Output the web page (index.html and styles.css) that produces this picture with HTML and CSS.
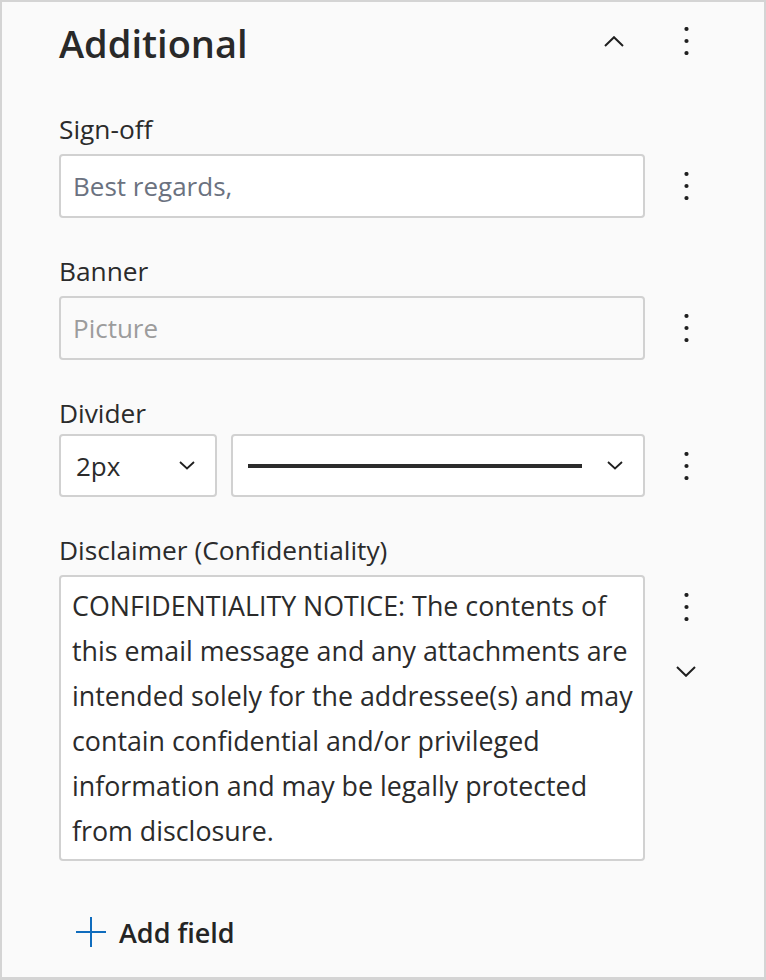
FILE: index.html
```html
<!DOCTYPE html>
<html lang="en">
<head>
    <meta charset="UTF-8">
    <meta name="viewport" content="width=device-width, initial-scale=1">
    <title>Signature - Additional</title>
    <link rel="stylesheet" href="styles.css">
</head>
<body>
    <section class="panel">
        <header class="panel-head">
            <h2 class="panel-title">Additional</h2>
            <button class="icon-btn collapse" aria-label="Collapse section">
                <svg width="20" height="11" viewBox="0 0 20 11"><path d="M1 10 L10 1.2 L19 10" fill="none" stroke="#1f1f1f" stroke-width="2"/></svg>
            </button>
            <div class="actions">
                <button class="icon-btn" aria-label="More options">
                    <svg width="5" height="28" viewBox="0 0 5 28"><circle cx="2.5" cy="2" r="2.1"/><circle cx="2.5" cy="14" r="2.1"/><circle cx="2.5" cy="26" r="2.1"/></svg>
                </button>
            </div>
        </header>

        <div class="field">
            <label class="field-label" for="signoff">Sign-off</label>
            <div class="field-row">
                <input class="text-input" id="signoff" type="text" placeholder="Best regards,">
                <div class="actions">
                    <button class="icon-btn" aria-label="More options">
                        <svg width="5" height="28" viewBox="0 0 5 28"><circle cx="2.5" cy="2" r="2.1"/><circle cx="2.5" cy="14" r="2.1"/><circle cx="2.5" cy="26" r="2.1"/></svg>
                    </button>
                </div>
            </div>
        </div>

        <div class="field">
            <label class="field-label" for="banner">Banner</label>
            <div class="field-row">
                <input class="text-input text-input--muted" id="banner" type="text" placeholder="Picture" disabled>
                <div class="actions">
                    <button class="icon-btn" aria-label="More options">
                        <svg width="5" height="28" viewBox="0 0 5 28"><circle cx="2.5" cy="2" r="2.1"/><circle cx="2.5" cy="14" r="2.1"/><circle cx="2.5" cy="26" r="2.1"/></svg>
                    </button>
                </div>
            </div>
        </div>

        <div class="field">
            <span class="field-label field-label--tight">Divider</span>
            <div class="field-row">
                <div class="select-group">
                    <button class="select select--size">
                        <span>2px</span>
                        <svg width="16" height="9" viewBox="0 0 16 9"><path d="M1 1 L8 7.5 L15 1" fill="none" stroke="#1f1f1f" stroke-width="1.8"/></svg>
                    </button>
                    <button class="select select--style" aria-label="Line style">
                        <span class="line-sample"></span>
                        <svg width="16" height="9" viewBox="0 0 16 9"><path d="M1 1 L8 7.5 L15 1" fill="none" stroke="#1f1f1f" stroke-width="1.8"/></svg>
                    </button>
                </div>
                <div class="actions">
                    <button class="icon-btn" aria-label="More options">
                        <svg width="5" height="28" viewBox="0 0 5 28"><circle cx="2.5" cy="2" r="2.1"/><circle cx="2.5" cy="14" r="2.1"/><circle cx="2.5" cy="26" r="2.1"/></svg>
                    </button>
                </div>
            </div>
        </div>

        <div class="field">
            <label class="field-label" for="disclaimer">Disclaimer (Confidentiality)</label>
            <div class="field-row field-row--top">
                <textarea class="text-area" id="disclaimer">CONFIDENTIALITY NOTICE: The contents of this email message and any attachments are intended solely for the addressee(s) and may contain confidential and/or privileged information and may be legally protected from disclosure.</textarea>
                <div class="actions actions--stack">
                    <button class="icon-btn" aria-label="More options">
                        <svg width="5" height="28" viewBox="0 0 5 28"><circle cx="2.5" cy="2" r="2.1"/><circle cx="2.5" cy="14" r="2.1"/><circle cx="2.5" cy="26" r="2.1"/></svg>
                    </button>
                    <button class="icon-btn" aria-label="Expand">
                        <svg width="20" height="11" viewBox="0 0 20 11"><path d="M1 1 L10 9.8 L19 1" fill="none" stroke="#1f1f1f" stroke-width="2"/></svg>
                    </button>
                </div>
            </div>
        </div>

        <button class="add-field">
            <svg width="30" height="30" viewBox="0 0 30 30"><path d="M15 0 V30 M0 15 H30" stroke="#0f6cbd" stroke-width="2"/></svg>
            <span>Add field</span>
        </button>
    </section>
</body>
</html>
```

FILE: styles.css
```css
* { box-sizing: border-box; }
body {
    margin: 0;
    font-family: 'Open Sans', sans-serif;
    color: #2b2b2b;
}
button {
    font: inherit;
    color: inherit;
    background: none;
    border: none;
    padding: 0;
    cursor: pointer;
}
.panel {
    width: 766px;
    height: 980px;
    border: 2px solid #d4d4d4;
    border-bottom-width: 3px;
    background: #fafafa;
    padding: 15px 0 0 57px;
}
.panel-head {
    display: flex;
    align-items: center;
    width: 668px;
    height: 52px;
}
.panel-title {
    flex: 1;
    margin: 0;
    font-size: 38px;
    font-weight: 600;
    line-height: 52px;
    color: #292929;
}
.panel-head .icon-btn {
    margin-bottom: 4px;
}
.collapse {
    margin-right: 11px;
}
.icon-btn {
    width: 40px;
    height: 40px;
    display: flex;
    align-items: center;
    justify-content: center;
}
.icon-btn circle { fill: #1f1f1f; }
.actions {
    width: 82px;
    flex: none;
    display: flex;
    justify-content: center;
}
.actions--stack {
    flex-direction: column;
    align-items: center;
    gap: 24px;
    padding-top: 12px;
}
.field {
    margin-top: 35px;
    width: 668px;
}
.panel-head + .field {
    margin-top: 42px;
}
.field-label {
    display: block;
    font-size: 26.3px;
    line-height: 36px;
    margin-bottom: 7px;
    color: #2b2b2b;
}
.field-label--tight {
    margin-bottom: 3px;
}
.field-row {
    display: flex;
    align-items: center;
}
.field-row--top {
    align-items: flex-start;
}
.text-input {
    width: 586px;
    height: 64px;
    flex: none;
    border: 2px solid #d1d1d1;
    border-radius: 4px;
    background: #fff;
    padding: 0 12px;
    font-family: inherit;
    font-size: 26px;
    color: #2b2b2b;
}
.text-input::placeholder { color: #6b7280; }
.text-input--muted { background: #fafafa; }
.text-input--muted::placeholder { color: #9c9c9c; }
.select-group {
    width: 586px;
    flex: none;
    display: flex;
    gap: 14px;
}
.select {
    height: 63px;
    display: flex;
    align-items: center;
    justify-content: space-between;
    border: 2px solid #d1d1d1;
    border-radius: 4px;
    background: #fff;
    padding: 0 20px 0 15px;
    font-size: 26px;
    text-align: left;
}
.select--size { width: 158px; }
.select--style { flex: 1; }
.line-sample {
    flex: 1;
    height: 4px;
    background: #2b2b2b;
    margin-right: 25px;
}
.text-area {
    width: 586px;
    height: 286px;
    flex: none;
    border: 2px solid #d1d1d1;
    border-radius: 4px;
    background: #fff;
    padding: 6px 4px 6px 11px;
    font-family: inherit;
    font-size: 26.8px;
    line-height: 45px;
    color: #2b2b2b;
    resize: none;
    overflow: hidden;
}
.add-field {
    display: flex;
    align-items: center;
    gap: 13px;
    height: 44px;
    margin: 49px 0 0 17px;
    font-size: 27px;
    font-weight: 600;
    color: #242424;
}
```
